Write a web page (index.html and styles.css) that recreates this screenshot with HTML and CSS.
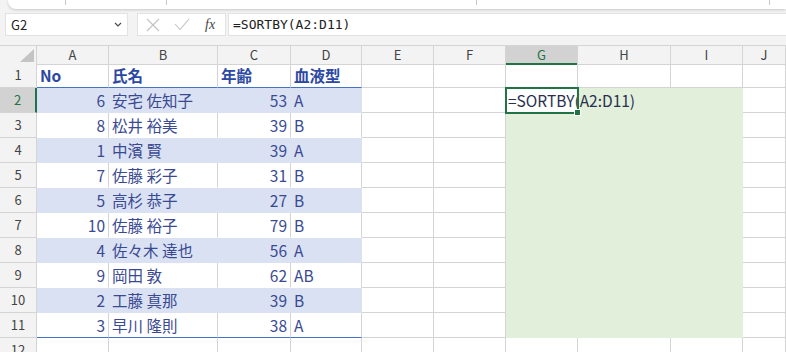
FILE: index.html
```html
<!DOCTYPE html>
<html lang="ja">
<head>
    <meta charset="UTF-8">
    <title>SORTBY</title>
    <link rel="stylesheet" href="styles.css">
</head>
<body>

    <!-- ribbon edge (cut off at the top) -->
    <div class="ribbon">
        <span class="sep s1"></span>
        <span class="sep s2"></span>
        <span class="sep s3"></span>
        <span class="sep s4"></span>
    </div>

    <!-- formula bar -->
    <div class="fbar">
        <div class="namebox">
            <span>G2</span>
            <svg width="8" height="5" viewBox="0 0 8 5"><path d="M1 1 L4 4 L7 1" fill="none" stroke="#444" stroke-width="1.1"/></svg>
        </div>
        <div class="fbtns">
            <svg width="14" height="14" viewBox="0 0 14 14"><path d="M1 1 L13 13 M13 1 L1 13" stroke="#c2c2c2" stroke-width="1.1"/></svg>
            <svg width="16" height="13" viewBox="0 0 16 13"><path d="M1 6 L6 11.5 L15 1" fill="none" stroke="#c2c2c2" stroke-width="1.1"/></svg>
            <span class="fx">fx</span>
        </div>
        <div class="finput">=SORTBY(A2:D11)</div>
    </div>

    <!-- sheet -->
    <div class="sheet">
        <div class="row colhd">
            <div class="hd corner"><svg width="16" height="15" viewBox="0 0 16 15"><path d="M15 1 L15 14 L1 14 Z" fill="#c4c4c4"/></svg></div>
            <div class="c">A</div><div class="c">B</div><div class="c">C</div><div class="c">D</div>
            <div class="c">E</div><div class="c">F</div><div class="c sel">G</div><div class="c">H</div>
            <div class="c">I</div><div class="c">J</div>
        </div>

        <div class="row">
            <div class="hd">1</div>
            <div class="c th">No</div><div class="c th">氏名</div><div class="c th">年齢</div><div class="c th">血液型</div>
            <div class="c"></div><div class="c"></div><div class="c"></div><div class="c"></div><div class="c"></div><div class="c"></div>
        </div>

        <div class="row">
            <div class="hd sel">2</div>
            <div class="c band num">6</div><div class="c band">安宅 佐知子</div><div class="c band num">53</div><div class="c band">A</div>
            <div class="c"></div><div class="c"></div>
            <div class="c spill active"><span>=SORTBY(A2:D11)</span></div><div class="c spill"></div><div class="c spill"></div>
            <div class="c"></div>
        </div>

        <div class="row">
            <div class="hd">3</div>
            <div class="c t num">8</div><div class="c t">松井 裕美</div><div class="c t num">39</div><div class="c t">B</div>
            <div class="c"></div><div class="c"></div>
            <div class="c spill"></div><div class="c spill"></div><div class="c spill"></div>
            <div class="c"></div>
        </div>

        <div class="row">
            <div class="hd">4</div>
            <div class="c band num">1</div><div class="c band">中濱 賢</div><div class="c band num">39</div><div class="c band">A</div>
            <div class="c"></div><div class="c"></div>
            <div class="c spill"></div><div class="c spill"></div><div class="c spill"></div>
            <div class="c"></div>
        </div>

        <div class="row">
            <div class="hd">5</div>
            <div class="c t num">7</div><div class="c t">佐藤 彩子</div><div class="c t num">31</div><div class="c t">B</div>
            <div class="c"></div><div class="c"></div>
            <div class="c spill"></div><div class="c spill"></div><div class="c spill"></div>
            <div class="c"></div>
        </div>

        <div class="row">
            <div class="hd">6</div>
            <div class="c band num">5</div><div class="c band">高杉 恭子</div><div class="c band num">27</div><div class="c band">B</div>
            <div class="c"></div><div class="c"></div>
            <div class="c spill"></div><div class="c spill"></div><div class="c spill"></div>
            <div class="c"></div>
        </div>

        <div class="row">
            <div class="hd">7</div>
            <div class="c t num">10</div><div class="c t">佐藤 裕子</div><div class="c t num">79</div><div class="c t">B</div>
            <div class="c"></div><div class="c"></div>
            <div class="c spill"></div><div class="c spill"></div><div class="c spill"></div>
            <div class="c"></div>
        </div>

        <div class="row">
            <div class="hd">8</div>
            <div class="c band num">4</div><div class="c band">佐々木 達也</div><div class="c band num">56</div><div class="c band">A</div>
            <div class="c"></div><div class="c"></div>
            <div class="c spill"></div><div class="c spill"></div><div class="c spill"></div>
            <div class="c"></div>
        </div>

        <div class="row">
            <div class="hd">9</div>
            <div class="c t num">9</div><div class="c t">岡田 敦</div><div class="c t num">62</div><div class="c t">AB</div>
            <div class="c"></div><div class="c"></div>
            <div class="c spill"></div><div class="c spill"></div><div class="c spill"></div>
            <div class="c"></div>
        </div>

        <div class="row">
            <div class="hd">10</div>
            <div class="c band num">2</div><div class="c band">工藤 真那</div><div class="c band num">39</div><div class="c band">B</div>
            <div class="c"></div><div class="c"></div>
            <div class="c spill"></div><div class="c spill"></div><div class="c spill"></div>
            <div class="c"></div>
        </div>

        <div class="row">
            <div class="hd">11</div>
            <div class="c t last num">3</div><div class="c t last">早川 隆則</div><div class="c t last num">38</div><div class="c t last">A</div>
            <div class="c"></div><div class="c"></div>
            <div class="c spill"></div><div class="c spill"></div><div class="c spill"></div>
            <div class="c"></div>
        </div>

        <div class="row">
            <div class="hd">12</div>
            <div class="c"></div><div class="c"></div><div class="c"></div><div class="c"></div>
            <div class="c"></div><div class="c"></div><div class="c"></div><div class="c"></div>
            <div class="c"></div><div class="c"></div>
        </div>
    </div>

</body>
</html>
```

FILE: styles.css
```css
/* Excel-like sheet */
body {
    margin: 0;
    background-color: #f3f3f3;
    font-family: "Noto Sans CJK JP", "Noto Sans", sans-serif;
    overflow: hidden;
}

/* ribbon edge */
.ribbon {
    position: relative;
    height: 9px;
    margin-left: 8px;
    background-color: #fff;
    border-bottom-left-radius: 8px;
    box-shadow: 0 1px 3px rgba(0, 0, 0, 0.18);
}

.sep {
    position: absolute;
    top: 0;
    width: 1px;
    height: 5px;
    background-color: #c8c8c8;
}

.s1 { left: 57px; }
.s2 { left: 158px; }
.s3 { left: 468px; }
.s4 { left: 761px; }

/* formula bar */
.fbar {
    display: flex;
    height: 23px;
    padding: 4px 0 9px 5px;
}

.namebox {
    display: flex;
    align-items: center;
    justify-content: space-between;
    box-sizing: border-box;
    width: 123px;
    padding: 0 5px 0 5px;
    background-color: #fff;
    border: 1px solid #e2e2e2;
    font-size: 13px;
    color: #222;
}

.fbtns {
    display: flex;
    align-items: center;
    box-sizing: border-box;
    width: 89px;
    margin-left: 9px;
    padding-left: 8px;
    gap: 14px;
    background-color: #fff;
    border: 1px solid #e2e2e2;
}

.fx {
    font-family: "Liberation Serif", serif;
    font-style: italic;
    font-size: 14px;
    color: #444;
    margin-left: 1px;
}

.finput {
    flex: 1;
    margin-left: 2px;
    padding-left: 4px;
    background-color: #fff;
    border: 1px solid #e2e2e2;
    border-right: none;
    font-family: "DejaVu Sans Mono", monospace;
    font-size: 13px;
    line-height: 21px;
    color: #222;
}

/* grid */
.sheet {
    background-color: #fff;
    border-top: 1px solid #d4d4d4;
}

.row {
    display: grid;
    grid-template-columns: 37px 72px 109px 73px 71px 72px 72px 72px 93px 72px 1fr;
    height: 25px;
}

.row.colhd {
    height: 17px;
}

.c, .hd {
    box-sizing: border-box;
    border-right: 1px solid #d4d4d4;
    border-bottom: 1px solid #d4d4d4;
    padding: 0 3px;
    font-size: 15.5px;
    line-height: 24px;
    color: #3a4a92;
    white-space: nowrap;
}

.hd {
    background-color: #f3f3f3;
    text-align: center;
    font-size: 13px;
    color: #444;
    padding: 0;
}

.hd.sel {
    background-color: #d2d2d2;
    border-right: 2px solid #217346;
    color: #217346;
}

.colhd .c {
    background-color: #f3f3f3;
    text-align: center;
    font-size: 13px;
    line-height: 17px;
    color: #444;
}

.colhd .c.sel {
    background-color: #d2d2d2;
    border-bottom: 2px solid #217346;
    color: #217346;
}

.corner {
    display: flex;
    align-items: flex-end;
    justify-content: flex-end;
    padding: 0 1px 1px 0;
}

/* table */
.th {
    font-weight: bold;
    color: #2b48a3;
    border-bottom-color: #4472c4;
}

.t {
    border-bottom-color: #fff;
}

.t.last {
    border-bottom-color: #4472c4;
}

.band {
    background-color: #d9e1f2;
    border-color: #d9e1f2;
}

.num {
    text-align: right;
}

/* spill range */
.spill {
    background-color: #e2efda;
    border-color: #e2efda;
}

.active {
    position: relative;
    z-index: 1;
    background-color: #fff;
    outline: 2px solid #217346;
    outline-offset: -1px;
    padding-left: 2px;
    color: #2a2f50;
}

.active::after {
    content: "";
    position: absolute;
    right: -4px;
    bottom: -4px;
    width: 5px;
    height: 5px;
    background-color: #217346;
    border: 1px solid #fff;
}
```
